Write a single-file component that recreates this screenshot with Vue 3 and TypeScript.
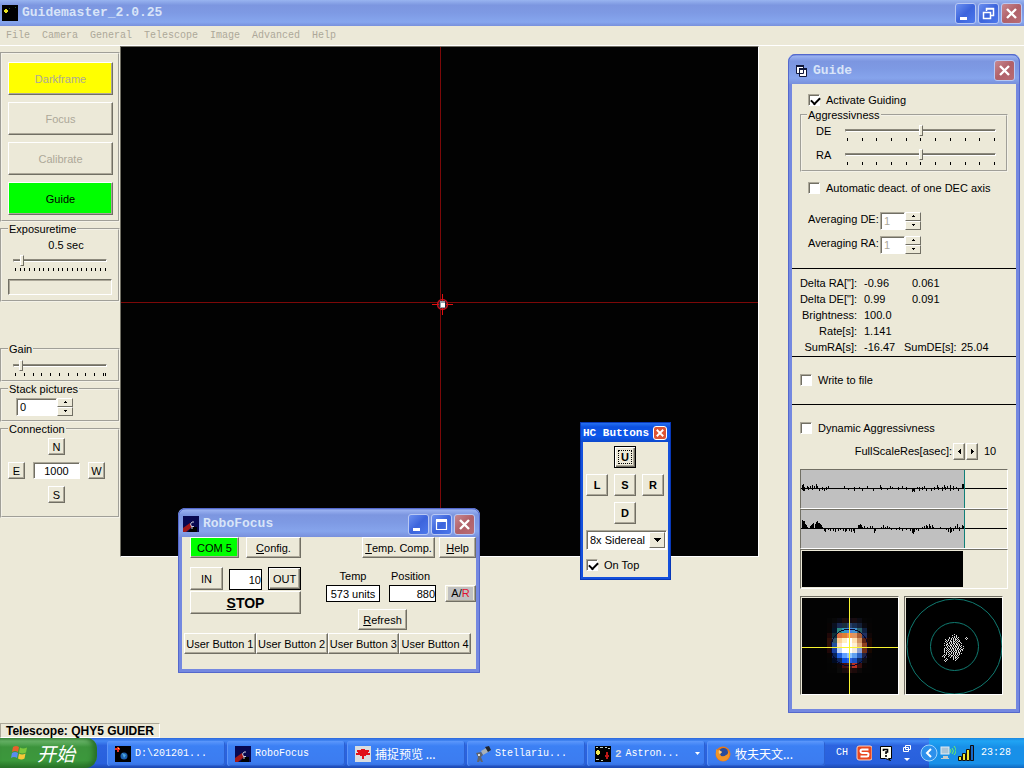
<script setup lang="ts">
import { ref } from 'vue'

const menus = ['File', 'Camera', 'General', 'Telescope', 'Image', 'Advanced', 'Help']
const modes = [
  { label: 'Darkframe', tone: 'yellow', off: true },
  { label: 'Focus', tone: '', off: true },
  { label: 'Calibrate', tone: '', off: true },
  { label: 'Guide', tone: 'green', off: false },
]
const stats = [
  { label: 'Delta RA["]:', value: '-0.96', extra: '0.061' },
  { label: 'Delta DE["]:', value: '0.99', extra: '0.091' },
  { label: 'Brightness:', value: '100.0', extra: '' },
  { label: 'Rate[s]:', value: '1.141', extra: '' },
]
const userButtons = ['User Button 1', 'User Button 2', 'User Button 3', 'User Button 4']

const activate = ref(true)
const autoDeact = ref(false)
const writeFile = ref(false)
const dynamic = ref(false)
const onTop = ref(true)
const exposure = ref(7)
const gain = ref(6)
const aggDe = ref(50)
const aggRa = ref(50)
const stack = ref('0')
const pulse = ref('1000')
const avgDe = ref('1')
const avgRa = ref('1')
const step = ref('10')
const temp = ref('573 units')
const position = ref('880')

// Bars above and below the zero line: [x, up, down]
type Bar = [number, number, number]
const raBars: Bar[] = [
  [1, 3, 1], [2, 4, 2], [3, 1, 2], [6, 2, 0], [7, 1, 1], [9, 2, 0], [11, 3, 1], [13, 2, 0], [15, 4, 0], [16, 2, 0],
  [18, 0, 2], [21, 1, 1], [23, 0, 2], [25, 1, 1], [27, 2, 0], [43, 2, 0], [47, 0, 1], [53, 1, 2], [58, 1, 0], [61, 0, 2],
  [66, 2, 0], [72, 0, 2], [79, 3, 0], [80, 1, 1], [86, 0, 1], [89, 2, 0], [91, 1, 0], [97, 1, 1], [101, 2, 0], [105, 1, 1],
  [111, 0, 3], [112, 0, 2], [113, 0, 3], [116, 1, 0], [118, 1, 2], [121, 1, 1], [123, 2, 0], [125, 0, 2], [130, 0, 2],
  [133, 1, 1], [136, 3, 0], [137, 1, 1], [141, 1, 2], [143, 3, 0], [144, 1, 1], [146, 2, 0], [149, 3, 2], [152, 2, 1],
  [155, 1, 0], [157, 0, 2], [161, 4, 0], [162, 4, 0],
]
const deBars: Bar[] = [
  [1, 8, 0], [2, 7, 0], [3, 7, 0], [4, 4, 0], [5, 3, 0], [6, 1, 0], [9, 2, 0], [10, 3, 0], [11, 4, 0], [12, 5, 0],
  [14, 4, 0], [15, 6, 0], [16, 7, 0], [17, 5, 0], [18, 5, 0], [19, 4, 0], [20, 3, 0], [21, 1, 0], [23, 0, 2], [24, 0, 3],
  [27, 0, 1], [29, 0, 2], [32, 0, 2], [34, 0, 3], [37, 0, 2], [39, 0, 1], [42, 0, 2], [44, 0, 3], [45, 0, 2], [48, 0, 2],
  [50, 0, 3], [52, 0, 2], [53, 0, 4], [57, 3, 0], [58, 3, 0], [59, 4, 0], [60, 3, 0], [61, 1, 0], [63, 2, 0], [66, 1, 0],
  [69, 2, 0], [71, 2, 0], [73, 0, 4], [74, 0, 2], [80, 1, 0], [82, 3, 0], [84, 1, 0], [86, 2, 0], [88, 1, 0], [90, 0, 1],
  [95, 0, 1], [98, 1, 1], [101, 0, 2], [105, 0, 1], [109, 0, 2], [111, 0, 4], [112, 0, 5], [113, 0, 3], [115, 0, 1],
  [117, 0, 2], [121, 1, 0], [123, 2, 0], [125, 3, 0], [126, 2, 0], [128, 4, 0], [129, 2, 0], [131, 3, 0], [132, 1, 0],
  [139, 1, 0], [145, 0, 1], [147, 0, 3], [149, 1, 4], [150, 0, 3], [152, 0, 2], [154, 2, 0], [156, 4, 0], [158, 1, 2],
  [161, 3, 0], [162, 2, 0],
]
const trace = (bars: Bar[]) => bars.map(([x, up, down]) => `M${x} ${18 - up}h1v${up + down + 1}h-1z`).join('')

// Brightness of the guide star, one colour per sensor pixel
const star = [
  '050505 080808 0a0a12 1c0e0e 120a14 180c10 0c0c14 050505 040404',
  '080404 0a1020 182850 1a3040 263c66 182e50 142038 0a0a10 060404',
  '080404 001428 2a8a80 3098c0 4a80e0 4090d0 2a6068 102040 060404',
  '200808 0c3038 d86c40 e08030 f09050 e09460 a85c34 203060 100606',
  '301008 305468 ffd090 fff0c0 ffffff ffe0b0 d09060 602412 200800',
  '301008 2450a0 ffe0c8 ffffff ffffff fff0d0 e0b080 904020 200800',
  '200808 1840a0 c0d4f4 ffffff ffffff f0e8e0 90a0d0 703018 180800',
  '080404 0a2458 2060e0 60a0ff 90c4ff 60a0f0 2a60c0 202444 080404',
  '050505 000a20 102a60 0a50e0 2a60e0 1a50c0 0c2860 101014 040404',
  '040404 050505 0e0808 481010 402020 b83020 381010 080404 040404',
  '040404 040404 0a0a0a 1a0c0c 240e0e 1c0a0a 0c0808 040404 040404',
].map((row) => row.split(' '))

// Recorded guiding positions
const dots = [
  '............#.............',
  '..........#...#...........',
  '............#.#...........',
  '.......#..#.#.#.#.......#.',
  '.......#.#.#.#.#.......#.#',
  '...#..#..#.#.##.#.......#.',
  '....#.#.#..#.#.#.#........',
  '...#.#..##.##.#.##........',
  '....#..#.#.#.#.#..#.......',
  '..#..#.#.#.##.#.#..#......',
  '....##..#.#.#.##.#........',
  '..#.#.#.##.#.#.#.#.#......',
  '.....#.#.#.#.##.#.#..#....',
  '...#.#..#.#.#.#.#..#......',
  '..#.#.#.#.##.#.##.#..#....',
  '..#..#.#.#.#.#.#.#.##.....',
  '..#.#.#..#.#.##.#.#.#.....',
  '..#..#.##.#.#.#.#.#.......',
  '..#.#.#..#.#.##.##........',
  '....#..#.#.#.#.#.#.#......',
  '..#.#.#.#..#.#.#.#........',
  '.#.#...#.##.#.#.#.........',
  '#.#...#..#.#.#.#..........',
  '..#.....#..#.##.#.........',
  '....#......#.#.#..........',
  '...#.#.....#..#...........',
  '..#.#........#............',
  '...#......................',
]
const dotPath = dots
  .map((row, y) => [...row].map((c, x) => (c === '#' ? `M${x + 36} ${y + 36}h1v1h-1z` : '')).join(''))
  .join('')
</script>

<template>
  <div class="desktop">
    <header class="titlebar main-title">
      <svg class="i16" viewBox="0 0 16 16" aria-hidden="true">
        <rect width="16" height="16" fill="#000" />
        <path d="M2 5h4v2H2zM3 4h2v4H3z" fill="#e8e020" />
        <path d="M7 3h1v1H7zM13 2h1v1h-1z" fill="#2a5a2a" />
      </svg>
      <h1>Guidemaster_2.0.25</h1>
      <div class="winbtns">
        <button class="wb" aria-label="Minimize"><svg viewBox="0 0 19 19"><path d="M4 13h7v3H4z" fill="#fff" /></svg></button>
        <button class="wb" aria-label="Restore">
          <svg viewBox="0 0 19 19"><path d="M7.500 7V4.500H14.500V11.500H12M4.500 8.500H11.500V14.500H4.500zM4 8.500H12M7 5H15" fill="none" stroke="#fff" stroke-width="1.500" /></svg>
        </button>
        <button class="wb red" aria-label="Close"><svg viewBox="0 0 19 19"><path d="M5 5l9 9M14 5l-9 9" stroke="#fff" stroke-width="2.400" /></svg></button>
      </div>
    </header>

    <nav class="menu">
      <button v-for="m in menus" :key="m" disabled>{{ m }}</button>
    </nav>

    <main class="work">
      <aside class="side">
        <section class="frame modes">
          <button v-for="m in modes" :key="m.label" class="btn" :class="m.tone" :disabled="m.off">{{ m.label }}</button>
        </section>

        <fieldset class="frame exposure">
          <legend>Exposuretime</legend>
          <label class="readout" for="exposure">0.5 sec</label>
          <div class="scale">
            <input id="exposure" v-model="exposure" type="range" min="0" max="100" />
            <div class="ticks"><i v-for="n in 20" :key="n"></i></div>
          </div>
          <div class="progress" role="progressbar" aria-label="Exposure"></div>
        </fieldset>

        <fieldset class="frame gain">
          <legend>Gain</legend>
          <div class="scale">
            <input v-model="gain" type="range" min="0" max="100" aria-label="Gain" />
            <div class="ticks last"><i v-for="n in 11" :key="n"></i></div>
          </div>
        </fieldset>

        <fieldset class="frame stack">
          <legend>Stack pictures</legend>
          <div class="spin">
            <input v-model="stack" class="field" type="text" aria-label="Stack pictures" />
            <div class="arrows">
              <button aria-label="More"><svg viewBox="0 0 5 3"><path d="M2 0h1v1h1v1H1V1h1z" /></svg></button>
              <button aria-label="Fewer"><svg viewBox="0 0 5 3"><path d="M1 0h3v1H3v1H2V1H1z" /></svg></button>
            </div>
          </div>
        </fieldset>

        <fieldset class="frame connection">
          <legend>Connection</legend>
          <div class="compass">
            <button class="btn n">N</button>
            <button class="btn e">E</button>
            <input v-model="pulse" class="field p" type="text" aria-label="Pulse length" />
            <button class="btn w">W</button>
            <button class="btn s">S</button>
          </div>
        </fieldset>
      </aside>

      <section class="viewer" aria-label="Camera image">
        <span class="hline"></span>
        <span class="vline"></span>
        <svg class="marker" viewBox="0 0 21 21" aria-hidden="true">
          <circle cx="10.500" cy="10.500" r="5" fill="#1b2430" stroke="#c0101c" stroke-width="1.400" />
          <path d="M10.500 0v7M10.500 14v7M0 10.500h7M14 10.500h7" stroke="#e01010" />
          <rect x="8" y="7" width="5" height="7" fill="#8fa0a8" />
          <rect x="9" y="9" width="4" height="4" fill="#fff" />
        </svg>
      </section>
    </main>

    <footer class="status"><span>Telescope: QHY5 GUIDER</span></footer>

    <!-- RoboFocus -->
    <section class="win robo" aria-label="RoboFocus">
      <header class="titlebar">
        <svg class="i16" viewBox="0 0 16 16" aria-hidden="true">
          <rect width="16" height="16" fill="#080850" />
          <path d="M0 12l7-5 2 4-6 5H0z" fill="#a01818" />
          <path d="M5 16l4-5h5v5z" fill="#000" />
          <path d="M11 6H9L7.500 8l1 2.500h2.500M9 10v3" fill="none" stroke="#c8c8d8" />
        </svg>
        <h2>RoboFocus</h2>
        <div class="winbtns">
          <button class="wb" aria-label="Minimize"><svg viewBox="0 0 19 19"><path d="M4 13h7v3H4z" fill="#fff" /></svg></button>
          <button class="wb" aria-label="Maximize"><svg viewBox="0 0 19 19"><path d="M4.500 5V14.500H14.500V5M4 5.500H15" fill="none" stroke="#fff" stroke-width="1.200" /><path d="M4 4h11v3H4z" fill="#fff" /></svg></button>
          <button class="wb red" aria-label="Close"><svg viewBox="0 0 19 19"><path d="M5 5l9 9M14 5l-9 9" stroke="#fff" stroke-width="2.400" /></svg></button>
        </div>
      </header>
      <div class="body">
        <div class="rtop">
          <button class="btn green com">COM 5</button>
          <button class="btn config"><u>C</u>onfig.</button>
          <button class="btn comp"><u>T</u>emp. Comp.</button>
          <button class="btn help"><u>H</u>elp</button>
        </div>
        <div class="rmid">
          <div class="moves">
            <button class="btn">IN</button>
            <input v-model="step" class="flat" type="text" aria-label="Steps" />
            <button class="btn default">OUT</button>
            <button class="btn stop"><span><u>S</u>TOP</span></button>
          </div>
          <div class="read">
            <div class="vals">
              <label for="temp">Temp</label>
              <label for="pos">Position</label>
              <input id="temp" v-model="temp" class="flat" type="text" />
              <input id="pos" v-model="position" class="flat" type="text" />
              <button class="btn ar"><span>A/<b>R</b></span></button>
            </div>
            <button class="btn refresh"><u>R</u>efresh</button>
          </div>
        </div>
        <div class="users">
          <button v-for="u in userButtons" :key="u" class="btn">{{ u }}</button>
        </div>
      </div>
    </section>

    <!-- Hand controller -->
    <section class="win hc" aria-label="HC Buttons">
      <header class="titlebar small">
        <h2>HC Buttons</h2>
        <button class="wb bright" aria-label="Close"><svg viewBox="0 0 13 13"><path d="M3 3l7 7M10 3l-7 7" stroke="#fff" stroke-width="2" /></svg></button>
      </header>
      <div class="body">
        <div class="pad">
          <button class="btn default up"><span>U</span></button>
          <button class="btn">L</button>
          <button class="btn">S</button>
          <button class="btn">R</button>
          <button class="btn down">D</button>
        </div>
        <div class="combo">
          <select aria-label="Rate"><option>8x Sidereal</option></select>
          <span class="drop" aria-hidden="true"><svg viewBox="0 0 7 4"><path d="M0 0h7v1H6v1H5v1H4v1H3V3H2V2H1V1H0z" /></svg></span>
        </div>
        <label class="check"><input v-model="onTop" type="checkbox" />On Top</label>
      </div>
    </section>

    <!-- Guide -->
    <section class="win guide" aria-label="Guide">
      <header class="titlebar">
        <svg class="i16" viewBox="0 0 16 16" aria-hidden="true">
          <path d="M3.500 2.500h7v8h-7zM6.500 5.500h7v8h-7z" fill="#fff" stroke="#10183c" />
          <path d="M3 2h8v2H3zM6 5h8v2H6z" fill="#10183c" />
        </svg>
        <h2>Guide</h2>
        <button class="wb red" aria-label="Close"><svg viewBox="0 0 19 19"><path d="M5 5l9 9M14 5l-9 9" stroke="#fff" stroke-width="2.400" /></svg></button>
      </header>
      <div class="body">
        <div class="sec s1">
          <label class="check in"><input v-model="activate" type="checkbox" />Activate Guiding</label>
          <fieldset class="box">
            <legend>Aggressivness</legend>
            <div class="agg">
              <label for="agg-de">DE</label>
              <div class="scale">
                <input id="agg-de" v-model="aggDe" type="range" min="0" max="100" />
                <div class="ticks"><i v-for="n in 11" :key="n"></i></div>
              </div>
            </div>
            <div class="agg">
              <label for="agg-ra">RA</label>
              <div class="scale">
                <input id="agg-ra" v-model="aggRa" type="range" min="0" max="100" />
                <div class="ticks"><i v-for="n in 11" :key="n"></i></div>
              </div>
            </div>
          </fieldset>
          <label class="check in auto"><input v-model="autoDeact" type="checkbox" />Automatic deact. of one DEC axis</label>
          <div class="avgs">
            <div class="avg">
              <label for="avg-de">Averaging DE:</label>
              <div class="spin">
                <input id="avg-de" v-model="avgDe" class="field" type="text" disabled />
                <div class="arrows">
                  <button aria-label="More"><svg viewBox="0 0 5 3"><path d="M2 0h1v1h1v1H1V1h1z" /></svg></button>
                  <button aria-label="Fewer"><svg viewBox="0 0 5 3"><path d="M1 0h3v1H3v1H2V1H1z" /></svg></button>
                </div>
              </div>
            </div>
            <div class="avg">
              <label for="avg-ra">Averaging RA:</label>
              <div class="spin">
                <input id="avg-ra" v-model="avgRa" class="field" type="text" disabled />
                <div class="arrows">
                  <button aria-label="More"><svg viewBox="0 0 5 3"><path d="M2 0h1v1h1v1H1V1h1z" /></svg></button>
                  <button aria-label="Fewer"><svg viewBox="0 0 5 3"><path d="M1 0h3v1H3v1H2V1H1z" /></svg></button>
                </div>
              </div>
            </div>
          </div>
        </div>

        <div class="sec s2">
          <table>
            <tbody>
              <tr v-for="s in stats" :key="s.label">
                <th scope="row">{{ s.label }}</th>
                <td>{{ s.value }}</td>
                <td class="extra">{{ s.extra }}</td>
              </tr>
              <tr>
                <th scope="row">SumRA[s]:</th>
                <td>-16.47</td>
                <td class="sum"><span>SumDE[s]:</span><span>25.04</span></td>
              </tr>
            </tbody>
          </table>
        </div>

        <div class="sec s3">
          <label class="check"><input v-model="writeFile" type="checkbox" />Write to file</label>
        </div>

        <div class="sec s4">
          <label class="check"><input v-model="dynamic" type="checkbox" />Dynamic Aggressivness</label>
          <div class="res">
            <span>FullScaleRes[asec]:</span>
            <button class="btn" aria-label="Less"><svg viewBox="0 0 5 7"><path d="M4 1v5H3V5H2V4H1V3h1V2h1V1z" /></svg></button>
            <button class="btn" aria-label="Greater"><svg viewBox="0 0 5 7"><path d="M1 1v5h1V5h1V4h1V3H3V2H2V1z" /></svg></button>
            <output>10</output>
          </div>
          <div class="graphs">
            <div class="graph"><svg viewBox="0 0 206 38" preserveAspectRatio="xMinYMin slice"><path d="M0 0h163v38H0z" fill="#c0c0c0" /><path d="M0 18h206v1H0z" /><path :d="trace(raBars)" /><path d="M163 0h1v38h-1z" fill="#108078" /></svg></div>
            <div class="graph"><svg viewBox="0 0 206 38" preserveAspectRatio="xMinYMin slice"><path d="M0 0h163v38H0z" fill="#c0c0c0" /><path d="M0 18h206v1H0z" /><path :d="trace(deBars)" /><path d="M163 0h1v38h-1z" fill="#108078" /></svg></div>
            <div class="graph"><svg viewBox="0 0 206 38" preserveAspectRatio="xMinYMin slice"><path d="M1 1h161v36H1z" /></svg></div>
          </div>
          <div class="images">
            <div class="image">
              <svg viewBox="0 0 96 96" shape-rendering="crispEdges">
                <rect width="96" height="96" fill="#030303" />
                <g v-for="(row, y) in star" :key="y">
                  <rect v-for="(c, x) in row" :key="x" :x="25 + x * 5" :y="20 + y * 5" width="5" height="5" :fill="'#' + c" />
                </g>
                <circle cx="47.500" cy="49.500" r="18.500" fill="none" stroke="#080830" />
                <path d="M47 0h1v96h-1zM0 49h96v1H0z" fill="#f8f430" />
              </svg>
            </div>
            <div class="image">
              <svg viewBox="0 0 96 96">
                <rect width="96" height="96" fill="#000" />
                <circle cx="48.500" cy="48.500" r="47.500" fill="none" stroke="#107a70" />
                <circle cx="48.500" cy="48.500" r="24" fill="none" stroke="#107a70" />
                <path :d="dotPath" fill="#d8d8d8" shape-rendering="crispEdges" />
              </svg>
            </div>
          </div>
        </div>
      </div>
    </section>

    <!-- Taskbar -->
    <footer class="taskbar">
      <button class="start">
        <svg viewBox="0 0 18 18" aria-hidden="true">
          <path d="M2 3q3-2 6 0L7 8Q4 6 1 8z" fill="#e8602c" />
          <path d="M9 3.500q3 2 7 0L15 8.500q-4 2-7 0z" fill="#7cc83c" />
          <path d="M1 9q3-2 6 0l-1 5q-3-2-6 0z" fill="#5a8cf0" />
          <path d="M8 9.500q3 2 6.500 0l-1 5q-3 2-6.500 0z" fill="#f8c838" />
        </svg>
        <span>开始</span>
      </button>
      <div class="tasks">
        <button class="task">
          <svg class="i16" viewBox="0 0 16 16"><rect width="16" height="16" fill="#000" /><path d="M0 2h5v2H0zM2 1h2v5H2z" fill="#e83020" /><path d="M3 2h1v1H3z" fill="#ffe040" /><circle cx="9" cy="10" r="3.500" fill="#1c60b0" /><path d="M7 7l4 2-2 3z" fill="#50a8d8" /></svg>
          <span>D:\201201...</span>
        </button>
        <button class="task">
          <svg class="i16" viewBox="0 0 16 16"><rect width="16" height="16" fill="#080850" /><path d="M0 12l7-5 2 4-6 5H0z" fill="#a01818" /><path d="M5 16l4-5h5v5z" fill="#000" /><path d="M11 6H9L7.500 8l1 2.500h2.500M9 10v3" fill="none" stroke="#c8c8d8" /></svg>
          <span>RoboFocus</span>
        </button>
        <button class="task">
          <svg class="i16" viewBox="0 0 16 16"><rect width="16" height="16" fill="#d8dce0" /><path d="M6 3h4v1h4v2h-1v1h2v2h-4v1H9v3H7v-3H5V9H1V7h2V6H2V4h4z" fill="#e01018" /></svg>
          <span class="cjk">捕捉预览 ...</span>
        </button>
        <button class="task">
          <svg class="i16" viewBox="0 0 16 16"><path d="M6 5l7-4 2 4-7 4z" fill="#a8b0b8" /><path d="M10 1l4-1 2 4-3 2z" fill="#20242c" /><path d="M1 7l5-1 2 3-2 2 2 5H6l-1-2-1 2H2l1-5z" fill="#60646c" /><path d="M3 8h2v2H3z" fill="#d8dce0" /></svg>
          <span>Stellariu...</span>
        </button>
        <button class="task">
          <svg class="i16" viewBox="0 0 16 16"><rect width="16" height="16" fill="#000" /><path d="M1 5h4v3H1zM2 4h2v5H2z" fill="#f0e850" /><path d="M1 1h2v1H1zM5 1h3v1H5zM10 1h2v1h-2zM13 2h2v1h-2zM1 13h3v1H1zM6 14h2v1H6z" fill="#c0d0c8" /><path d="M12 6v7M10 10h4" stroke="#c01818" stroke-width="2" /></svg>
          <b>2</b><span>Astron...</span>
          <svg class="caret" viewBox="0 0 5 3"><path d="M0 0h5L2.500 3z" fill="#fff" /></svg>
        </button>
        <button class="task">
          <svg class="i16" viewBox="0 0 16 16"><circle cx="8" cy="8" r="7.500" fill="#e87818" /><circle cx="8.500" cy="6.500" r="4.500" fill="#284c9c" /><path d="M1 3q2 2 3 1l3 2-2 2 1 2q3 1 5-1 3-1 2-4 2 2 1 6-2 4-6 4-6-1-7-6z" fill="#f09428" /><path d="M4 4l3 2-2 2q-2-1-1-4z" fill="#f8d088" /></svg>
          <span class="cjk">牧夫天文...</span>
        </button>
      </div>
      <div class="lang">
        <span>CH</span>
        <svg class="i16" viewBox="0 0 16 16"><rect x="1" y="1" width="15" height="14" rx="2" fill="#e84820" stroke="#f8d0c0" /><path d="M12.500 4.500H6q-1.500 0-1.500 1.700T6 8h5q1.500 0 1.500 1.700T11 11.500H4.500" fill="none" stroke="#fff" stroke-width="2" /></svg>
        <svg class="i16" viewBox="0 0 16 16"><path d="M2.500 1.500h11v12h-3l2 2-5-2h-5z" fill="#fffff0" stroke="#000" /><path d="M5.500 6V4.500h4V7H8v2M8 10v2" fill="none" stroke="#000" stroke-width="1.600" /></svg>
        <svg class="mini" viewBox="0 0 10 16"><path d="M3.500 0.500h5v4h-5zM1.500 2.500h5v4h-5z" fill="#2a60d8" stroke="#fff" /><path d="M2 13h6l-3 3z" fill="#fff" /></svg>
      </div>
      <div class="tray">
        <svg class="chev" viewBox="0 0 18 18"><circle cx="9" cy="9" r="8" fill="#2c90ec" stroke="#a0d4fc" /><path d="M11 5L7 9l4 4" fill="none" stroke="#fff" stroke-width="2" /></svg>
        <svg class="i16" viewBox="0 0 16 16"><rect x="1" y="2" width="8" height="7" fill="#a8c4d8" stroke="#e0ecf4" /><path d="M3 11h5v2H3zM1 13h8v1H1z" fill="#c8ccc8" /><path d="M10 4q2 2 0 4M12 3q3 3 0 6M14 1q4 5 0 9" fill="none" stroke="#70f060" /></svg>
        <svg class="i16" viewBox="0 0 16 16"><path d="M0.500 11.500h3v4h-3zM4.500 8.500h3v7h-3zM8.500 4.500h3v11h-3z" fill="#f0e830" stroke="#101010" /><path d="M12.500 0.500h3v15h-3z" fill="#1868c8" stroke="#101010" /></svg>
        <time>23:28</time>
      </div>
    </footer>
  </div>
</template>

<style>
html,
body,
#app {
  height: 100%;
}
body {
  background: #ece9d8;
}
</style>

<style scoped>
* {
  box-sizing: border-box;
}
.desktop {
  position: relative;
  display: flex;
  flex-direction: column;
  min-height: 100%;
  overflow: hidden;
  background: #ece9d8;
  color: #000;
  font: 11px/14px 'Liberation Sans', Arial, 'Noto Sans CJK SC', sans-serif;
}
button,
input,
select {
  margin: 0;
  padding: 0;
  border: 0;
  border-radius: 0;
  background: none;
  color: inherit;
  font: inherit;
}
svg {
  display: block;
  flex: none;
}
.i16 {
  width: 16px;
  height: 16px;
}

/* Title bars */
.titlebar {
  display: flex;
  align-items: center;
  gap: 4px;
  height: 30px;
  padding: 3px 5px 0 5px;
  border-radius: 7px 7px 0 0;
  background: linear-gradient(#5c74cc 0, #98b0f0 8%, #7c96e0 24%, #7e9ae4 50%, #86a4ec 80%, #7890dc 100%);
  color: #d8e4f8;
}
.main-title {
  height: 26px;
  padding: 0 2px;
  border-radius: 0;
  background: linear-gradient(#98b4f0 0, #7c96e0 20%, #7e9ae4 50%, #86a6ee 85%, #7890dc 100%);
}
h1,
h2 {
  flex: 1;
  margin: 0;
  font: bold 13px/16px 'Liberation Mono', monospace;
  white-space: nowrap;
}
.winbtns {
  display: flex;
  gap: 2px;
}
.wb {
  width: 21px;
  height: 21px;
  border: 1px solid #b8c8f4;
  border-radius: 3px;
  background: linear-gradient(135deg, #6c90f0, #3c64dc 50%, #4c78ec);
}
.wb.red {
  background: linear-gradient(135deg, #c88890, #b06068 50%, #b86c74);
}
.wb svg {
  width: 100%;
  height: 100%;
}

.menu {
  display: flex;
  gap: 12px;
  height: 20px;
  padding: 0 6px;
  border-bottom: 1px solid #fff;
}
.menu button {
  color: #aca899;
  font: 10px/20px 'Liberation Mono', monospace;
}

/* Buttons and fields */
.btn {
  display: flex;
  align-items: center;
  justify-content: center;
  border: 1px solid;
  border-color: #fff #716f64 #716f64 #fff;
  background: #ece9d8;
  box-shadow: inset -1px -1px #aca899;
  white-space: nowrap;
}
.btn:disabled {
  color: #aca899;
}
.btn.yellow {
  background: #ff0;
}
.btn.green {
  background: #0f0;
}
.btn.default {
  border-color: #000;
  box-shadow: inset 1px 1px #fff, inset -1px -1px #716f64, inset -2px -2px #aca899;
}
.field {
  min-width: 0;
  border: 1px solid;
  border-color: #aca899 #fff #fff #aca899;
  background: #fff;
  box-shadow: inset 1px 1px #716f64;
  padding-left: 3px;
}
.field:disabled {
  color: #aca899;
}
.spin {
  display: flex;
  height: 18px;
}
.arrows {
  display: flex;
  flex-direction: column;
  width: 16px;
}
.arrows button {
  display: flex;
  flex: 1;
  align-items: center;
  justify-content: center;
  border: 1px solid;
  border-color: #fff #716f64 #716f64 #fff;
}
.arrows svg {
  width: 5px;
  height: 3px;
}

.check {
  display: flex;
  align-items: center;
  gap: 6px;
  height: 14px;
  white-space: nowrap;
}
.check input {
  flex: none;
  width: 12px;
  height: 12px;
  appearance: none;
  border: 1px solid;
  border-color: #aca899 #fff #fff #aca899;
  background: #fff;
  box-shadow: inset 1px 1px #716f64;
}
.check input:checked::after {
  display: block;
  width: 7px;
  height: 4px;
  margin: 2px 0 0 2px;
  border: solid #000;
  border-width: 0 0 2px 2px;
  content: '';
  transform: rotate(-45deg);
}

/* Frames */
.frame,
.box {
  min-width: 0;
  margin: 0;
  border: 2px groove #f4f2e8;
  padding: 0 6px;
}
legend {
  height: 14px;
  padding: 0 1px;
}

/* Sliders */
input[type='range'] {
  display: block;
  width: 100%;
  height: 14px;
  appearance: none;
}
input[type='range']::-webkit-slider-runnable-track {
  height: 3px;
  border: 1px solid;
  border-color: #8c897c #fff #fff #8c897c;
  background: #716f64;
}
input[type='range']::-webkit-slider-thumb {
  width: 4px;
  height: 11px;
  margin-top: -5px;
  appearance: none;
  border: 1px solid;
  border-color: #fff #716f64 #716f64 #fff;
  background: #ece9d8;
}
.ticks {
  display: flex;
  justify-content: space-between;
  height: 3px;
  margin: 1px 1px 0 2px;
}
.ticks i {
  width: 1px;
  background: #000;
}
.ticks.last {
  margin-right: 3px;
}
.ticks.last i:last-child {
  width: 3px;
  margin-right: -2px;
  border-right: 1px solid #000;
  border-left: 1px solid #000;
  background: none;
}

/* Workspace */
.work {
  display: grid;
  grid-template-columns: 120px minmax(0, 1fr);
  align-items: start;
  flex: 1;
  padding-right: 265px;
}
.side {
  padding-top: 6px;
}
.modes {
  display: flex;
  flex-direction: column;
  gap: 7px;
  padding: 8px 5px 5px 6px;
}
.modes .btn {
  height: 33px;
}
.exposure {
  padding-bottom: 5px;
}
.readout {
  display: block;
  padding: 2px 0 1px 12px;
  text-align: center;
}
.side .scale {
  margin: 0 5px;
}
.progress {
  height: 16px;
  margin-top: 8px;
  border: 1px solid;
  border-color: #716f64 #fff #fff #716f64;
  box-shadow: inset 1px 1px #aca899;
}
.gain {
  margin-top: 40px;
  padding-top: 2px;
  padding-bottom: 4px;
}
.stack {
  padding: 2px 6px 4px 14px;
}
.stack legend {
  margin-left: -8px;
}
.stack .field {
  width: 41px;
}
.connection {
  padding-top: 2px;
  padding-bottom: 13px;
}
.compass {
  display: grid;
  grid-template: 'a n b' 17px 'e p w' 17px 'c s d' 17px / 17px 47px 17px;
  gap: 7px 8px;
  justify-items: center;
}
.compass .btn {
  width: 17px;
  height: 17px;
}
.n { grid-area: n; }
.e { grid-area: e; }
.w { grid-area: w; }
.s { grid-area: s; }
.p {
  grid-area: p;
  width: 47px;
  padding: 0;
  text-align: center;
}
.viewer {
  position: relative;
  aspect-ratio: 639 / 511;
  border: 1px solid;
  border-color: #716f64 #fff #fff #716f64;
  background: #020202;
  overflow: hidden;
}
.hline,
.vline {
  position: absolute;
  background: #7c0808;
}
.hline {
  top: 50%;
  left: 0;
  width: 100%;
  height: 1px;
}
.vline {
  top: 0;
  left: 50%;
  width: 1px;
  height: 100%;
}
.marker {
  position: absolute;
  top: calc(50% - 8px);
  left: calc(50% - 8px);
  width: 21px;
  height: 21px;
}

.status {
  display: flex;
  height: 15px;
}
.status span {
  border: 1px solid;
  border-color: #aca899 #fff #fff #aca899;
  padding: 0 5px;
  font-weight: bold;
  font-size: 12px;
}

/* Windows */
.win {
  position: absolute;
  border: 4px solid #7488e0;
  border-top: 0;
  border-radius: 8px 8px 0 0;
  background: #ece9d8;
  outline: 1px solid #5468cc;
  outline-offset: -1px;
}
.win > .titlebar {
  margin: 0 -4px;
}

.robo {
  top: 508px;
  left: 178px;
  width: 302px;
}
.robo > .titlebar {
  height: 29px;
}
.robo .body {
  padding-bottom: 15px;
}
.rtop {
  display: flex;
  padding-left: 8px;
}
.rtop .btn {
  height: 21px;
}
.com {
  width: 49px;
  margin-right: 7px;
}
.config {
  width: 55px;
}
.comp {
  width: 73px;
  margin-right: 4px;
  margin-left: auto;
}
.help {
  width: 37px;
}
.rmid {
  display: flex;
  justify-content: space-between;
  padding: 9px 0 3px 8px;
}
.moves {
  display: grid;
  grid-template-columns: 33px 33px 33px;
  grid-template-rows: 23px 23px;
  column-gap: 6px;
  row-gap: 1px;
}
.flat {
  min-width: 0;
  border: 1px solid #000;
  background: #fff;
  text-align: right;
}
.moves .flat {
  margin-top: 2px;
}
.stop {
  grid-column: 1 / 4;
  font-weight: bold;
  font-size: 14px;
}
.read {
  display: flex;
  flex-direction: column;
}
.vals {
  display: grid;
  grid-template-columns: 54px 47px 31px;
  grid-template-rows: 18px 17px;
  column-gap: 9px;
  text-align: center;
  line-height: 18px;
}
.vals label:nth-child(2) {
  margin-right: 4px;
}
#temp {
  grid-column: 1;
  grid-row: 2;
  text-align: center;
}
#pos {
  grid-column: 2;
  grid-row: 2;
}
.vals .flat {
  line-height: 14px;
}
.ar {
  grid-column: 3;
  grid-row: 2;
}
.ar span {
  padding: 0 3px;
  background: #c0c0c0;
  line-height: 13px;
}
.ar b {
  color: #e01030;
  font-weight: normal;
}
.refresh {
  width: 49px;
  height: 21px;
  margin: 7px 0 0 32px;
}
.users {
  display: flex;
  padding: 0 5px 0 2px;
}
.users .btn {
  flex: 1;
  height: 21px;
}

.hc {
  top: 422px;
  left: 580px;
  width: 91px;
  border: 3px solid #1450dc;
  border-top: 0;
  border-radius: 0;
  outline-color: #0838b8;
}
.hc > .titlebar {
  height: 20px;
  margin: 0 -3px;
  padding: 1px 4px 0 3px;
  gap: 0;
  border-radius: 0;
  background: linear-gradient(#2c78f4 0, #0c50e0 25%, #0c58ec 70%, #0c48cc 100%);
  color: #fff;
}
.hc h2 {
  font: bold 11px/16px 'Liberation Mono', monospace;
}
.bright {
  width: 14px;
  height: 14px;
  border-color: #fff;
  background: #dc5434;
}
.hc .body {
  padding: 4px 1px 5px 3px;
}
.pad {
  display: grid;
  grid-template-columns: 22px 22px 22px;
  grid-auto-rows: 22px;
  gap: 6px 6px;
  font-weight: bold;
}
.up,
.down {
  grid-column: 2;
}
.pad .btn:nth-child(2) {
  grid-column: 1;
}
.up span {
  padding: 0 2px;
  border: 1px dotted #000;
  line-height: 12px;
}
.combo {
  display: grid;
  margin-top: 6px;
  height: 20px;
}
.combo select {
  grid-area: 1 / 1;
  appearance: none;
  border: 1px solid;
  border-color: #aca899 #fff #fff #aca899;
  background: #fff;
  box-shadow: inset 1px 1px #716f64;
  padding-left: 3px;
}
.drop {
  display: flex;
  grid-area: 1 / 1;
  align-items: center;
  justify-content: center;
  justify-self: end;
  width: 16px;
  margin: 2px 2px 2px 0;
  border: 1px solid;
  border-color: #fff #716f64 #716f64 #fff;
  background: #ece9d8;
  pointer-events: none;
}
.drop svg {
  width: 7px;
  height: 4px;
}
.hc .check {
  margin-top: 8px;
}

.guide {
  top: 54px;
  right: 4px;
  width: 232px;
}
.sec {
  padding: 0 8px;
}
.sec + .sec {
  border-top: 1px solid #000;
}
.s1 {
  padding-top: 9px;
  padding-bottom: 14px;
}
.check.in {
  margin-left: 8px;
}
.box {
  margin-top: 1px;
  padding: 0 10px 5px 5px;
}
.agg {
  display: flex;
  padding: 1px 0 0 9px;
}
.agg + .agg {
  padding-top: 6px;
}
.agg label {
  width: 29px;
  line-height: 16px;
}
.agg .scale {
  flex: 1;
}
.auto {
  margin-top: 9px;
}
.avgs {
  display: grid;
  gap: 6px;
  margin: 17px 0 0 8px;
}
.avg {
  display: flex;
}
.avg label {
  width: 72px;
}
.avg .field {
  width: 25px;
}
.s2 {
  padding: 6px 0 1px;
}
table {
  width: 100%;
  border-collapse: collapse;
  table-layout: fixed;
}
th,
td {
  height: 16px;
  padding: 0;
  font-weight: normal;
  line-height: 16px;
  text-align: left;
  white-space: nowrap;
}
th {
  width: 65px;
  text-align: right;
}
td {
  width: 47px;
  padding-left: 7px;
}
td.extra {
  width: auto;
  padding-left: 8px;
}
td.sum {
  padding-left: 0;
}
.sum span {
  display: inline-block;
  width: 57px;
}
.s3 {
  padding-top: 16px;
  padding-bottom: 17px;
}
.s4 {
  padding-top: 16px;
  padding-bottom: 14px;
}
.res {
  display: flex;
  justify-content: flex-end;
  gap: 1px;
  margin: 8px 7px 0 0;
  line-height: 16px;
}
.res .btn {
  width: 12px;
  height: 17px;
}
.res .btn svg {
  width: 5px;
  height: 7px;
}
.res output {
  width: 17px;
  margin-left: 5px;
}
.graphs {
  margin-top: 9px;
}
.graph,
.image {
  border: 1px solid;
  border-color: #716f64 #fff #fff #716f64;
}
.graph svg {
  width: 100%;
  height: 38px;
}
.images {
  display: flex;
  gap: 5px;
  margin-top: 7px;
}
.image {
  padding: 1px 0 0 1px;
}
.image svg {
  width: 96px;
  height: 96px;
}

/* Taskbar */
.taskbar {
  display: flex;
  height: 30px;
  background: linear-gradient(#2c68dc 0, #4488f4 10%, #2c64e0 25%, #2860dc 85%, #1c48b0 100%);
  color: #fff;
  font: 10px/14px 'Liberation Mono', 'Noto Sans CJK SC', monospace;
}
.start {
  display: flex;
  align-items: center;
  gap: 8px;
  width: 97px;
  margin-right: 10px;
  padding-left: 11px;
  border-radius: 0 10px 12px 0;
  background: linear-gradient(#4c9c4c 0, #68b468 10%, #3c943c 30%, #3c983c 75%, #287428 100%);
  box-shadow: inset -4px 0 5px #287028;
}
.start svg {
  width: 18px;
  height: 18px;
}
.start span {
  font: italic 19px/24px 'Noto Sans CJK SC', sans-serif;
}
.tasks {
  display: flex;
  flex: 1;
  gap: 2px;
  min-width: 0;
  padding: 3px 0 2px;
}
.task {
  display: flex;
  flex: 0 1 118px;
  align-items: center;
  gap: 4px;
  min-width: 0;
  padding: 0 5px 0 8px;
  border-radius: 3px;
  background: linear-gradient(#5c98fc 0, #3c80f4 20%, #3c7cf0 85%, #3470e0 100%);
  box-shadow: inset 1px 0 #5c94f8, inset -1px -1px #2c60d0;
  white-space: nowrap;
  overflow: hidden;
}
.task b {
  color: #d8dce8;
  font-size: 11px;
}
.cjk {
  font: 12px/14px 'Noto Sans CJK SC', sans-serif;
}
.caret {
  width: 5px;
  height: 3px;
  margin-left: auto;
}
.lang,
.tray {
  display: flex;
  align-items: center;
}
.lang {
  gap: 6px;
  padding: 0 17px 0 8px;
}
.lang span {
  margin-right: 2px;
}
.mini {
  width: 10px;
  height: 16px;
  margin-left: 2px;
}
.tray {
  gap: 2px;
  padding-right: 13px;
  background: linear-gradient(#1c88e0 0, #20a4f4 10%, #1890e8 30%, #1890e8 85%, #1068c0 100%);
}
.chev {
  width: 18px;
  height: 18px;
  margin-left: -9px;
}
.tray time {
  margin-left: 5px;
}
</style>
